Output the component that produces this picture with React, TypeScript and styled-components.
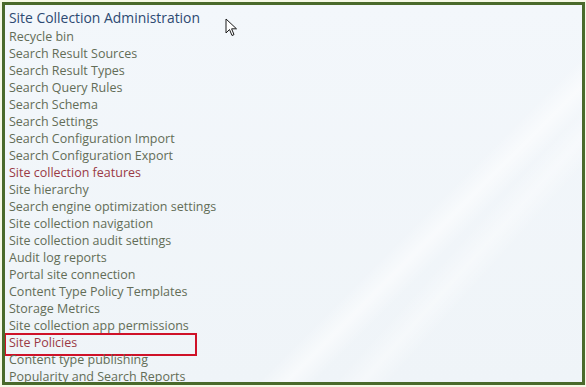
import React from "react";
import styled, { createGlobalStyle } from "styled-components";

const Global = createGlobalStyle`
  html, body { margin: 0; padding: 0; }
  body {
    width: 586px;
    height: 387px;
    overflow: hidden;
    background: #f6f9e6;
    font-family: "Open Sans", "Noto Sans", sans-serif;
  }
`;

const Frame = styled.div`
  position: relative;
  margin: 2px 0 0 2px;
  width: 573px;
  height: 374px;
  border: 3px solid #4a6a2b;
  overflow: hidden;
  background:
    linear-gradient(135deg, transparent 66%, rgba(255,255,255,0.55) 69%, transparent 72%),
    linear-gradient(132deg, transparent 73%, rgba(255,255,255,0.4) 76%, transparent 79%),
    linear-gradient(180deg, #f3f7fb 0%, #eff4f8 100%);
  padding: 3px 0 0 4px;
  box-sizing: content-box;
`;

const Heading = styled.div`
  font-size: 13.9px;
  line-height: 20px;
  color: #2d4a72;
  white-space: nowrap;
`;

const List = styled.ul`
  list-style: none;
  margin: 0;
  padding: 0;
`;

const Item = styled.li<{ $active?: boolean; $boxed?: boolean }>`
  position: relative;
  font-size: 12.5px;
  line-height: 17px;
  color: ${(p) => (p.$active ? "#9a3a45" : "#636d57")};
  white-space: nowrap;
  ${(p) =>
    p.$boxed
      ? `
    &::after {
      content: "";
      position: absolute;
      left: -5px;
      top: -1px;
      width: 189px;
      height: 19px;
      border: 2px solid #cf1128;
    }
  `
      : ""}
`;

const Cursor = styled.svg`
  position: absolute;
  left: 220px;
  top: 13px;
`;

const items: { label: string; active?: boolean; boxed?: boolean }[] = [
  { label: "Recycle bin" },
  { label: "Search Result Sources" },
  { label: "Search Result Types" },
  { label: "Search Query Rules" },
  { label: "Search Schema" },
  { label: "Search Settings" },
  { label: "Search Configuration Import" },
  { label: "Search Configuration Export" },
  { label: "Site collection features", active: true },
  { label: "Site hierarchy" },
  { label: "Search engine optimization settings" },
  { label: "Site collection navigation" },
  { label: "Site collection audit settings" },
  { label: "Audit log reports" },
  { label: "Portal site connection" },
  { label: "Content Type Policy Templates" },
  { label: "Storage Metrics" },
  { label: "Site collection app permissions" },
  { label: "Site Policies", active: true, boxed: true },
  { label: "Content type publishing" },
  { label: "Popularity and Search Reports" },
];

export default function App() {
  return (
    <>
      <Global />
      <Frame>
        <Heading>Site Collection Administration</Heading>
        <List>
          {items.map((it) => (
            <Item key={it.label} $active={it.active} $boxed={it.boxed}>
              {it.label}
            </Item>
          ))}
        </List>
        <Cursor width="13" height="20" viewBox="0 0 13 20">
          <path
            d="M1 1 L1 15 L4.5 11.5 L7 17.5 L9 16.6 L6.6 10.8 L11.5 10.8 Z"
            fill="#ffffff"
            stroke="#1a1a1a"
            strokeWidth="1"
            strokeLinejoin="round"
          />
        </Cursor>
      </Frame>
    </>
  );
}
